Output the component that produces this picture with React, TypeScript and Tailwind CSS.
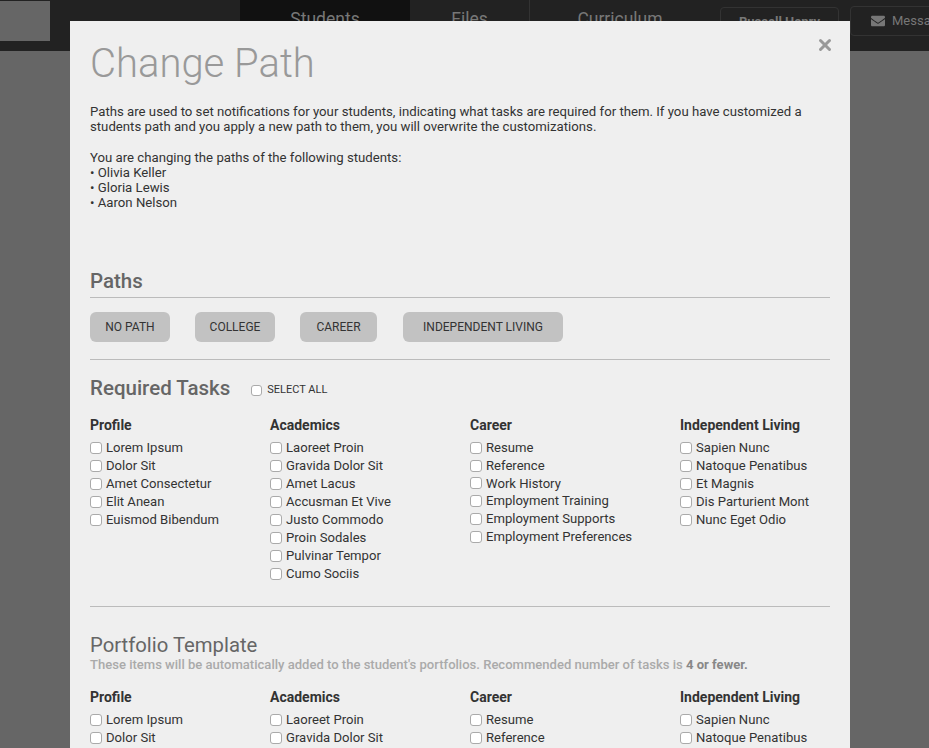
import React from 'react';
import { X } from 'lucide-react';
import { FaEnvelope } from 'react-icons/fa';

const COLUMNS = [
  { title: 'Profile', width: 'w-[180px]', row: 'h-[18px]', items: ['Lorem Ipsum', 'Dolor Sit', 'Amet Consectetur', 'Elit Anean', 'Euismod Bibendum'] },
  { title: 'Academics', width: 'w-[200px]', row: 'h-[18px]', items: ['Laoreet Proin', 'Gravida Dolor Sit', 'Amet Lacus', 'Accusman Et Vive', 'Justo Commodo', 'Proin Sodales', 'Pulvinar Tempor', 'Cumo Sociis'] },
  { title: 'Career', width: 'w-[210px]', row: 'h-[17.8px]', items: ['Resume', 'Reference', 'Work History', 'Employment Training', 'Employment Supports', 'Employment Preferences'] },
  { title: 'Independent Living', width: 'w-[150px]', row: 'h-[18px]', items: ['Sapien Nunc', 'Natoque Penatibus', 'Et Magnis', 'Dis Parturient Mont', 'Nunc Eget Odio'] },
];

const PATHS = [
  { label: 'NO PATH', className: 'w-[80px]' },
  { label: 'COLLEGE', className: 'w-[80px]' },
  { label: 'CAREER', className: 'w-[77px]' },
  { label: 'INDEPENDENT LIVING', className: 'w-[160px] ml-[1px]' },
];

const Checkbox = ({ className }: { className: string }) => (
  <input type="checkbox" className={`appearance-none bg-white border border-[#aaa] rounded-[3px] shrink-0 m-0 ${className}`} />
);

const TaskColumns = () => (
  <div className="flex">
    {COLUMNS.map(col => (
      <div key={col.title} className={col.width}>
        <h4 className="text-[14px] leading-[18px] font-bold text-[#333] mb-[5px]">{col.title}</h4>
        {col.items.map(item => (
          <label key={item} className={`flex items-center ${col.row} text-[13.1px] text-[#333]`}>
            <Checkbox className="w-[12px] h-[12px] mr-[4px]" />
            <span>{item}</span>
          </label>
        ))}
      </div>
    ))}
  </div>
);

const App: React.FC = () => {
  return (
    <div className="relative w-[929px] h-[748px] overflow-hidden bg-[#666] font-['Roboto',sans-serif]">
      <div className="h-[51px] bg-[#222] flex items-start">
        <div className="w-[50px] h-[40px] mt-[1px] bg-[#666] shrink-0" />
        <div className="ml-[190px] w-[170px] h-[51px] shrink-0 bg-[#111] text-center text-[#777] text-[17.5px] leading-[38px]">Students</div>
        <div className="w-[120px] h-[51px] shrink-0 text-center text-[#777] text-[17.5px] leading-[38px] border-r border-[#333]">Files</div>
        <div className="w-[180px] h-[51px] shrink-0 text-center text-[#777] text-[17.5px] leading-[38px]">Curriculum</div>
        <div className="ml-[10px] mt-[7px] w-[119px] h-[28px] shrink-0 border border-[#333] rounded-[4px] text-center text-[#777] text-[13px] font-bold leading-[28px]">Russell Henry</div>
        <div className="ml-[11px] mt-[6px] w-[100px] h-[30px] shrink-0 border border-[#333] rounded-[4px] flex items-center pl-[20px] text-[#777] text-[13px]">
          <FaEnvelope size={14} className="mr-[7px] shrink-0" />
          <span>Messages</span>
        </div>
      </div>

      <div className="absolute left-[70px] top-[21px] w-[780px] h-[727px] bg-[#efefef] px-[20px] overflow-hidden">
        <X size={18} strokeWidth={4} className="absolute right-[16px] top-[15px] text-[#999]" />
        <h1 className="text-[40px] leading-[50px] font-light text-[#999] mt-[18px]">Change Path</h1>
        <div className="mt-[15px] text-[13.2px] leading-[15px] text-[#333]">
          <p>Paths are used to set notifications for your students, indicating what tasks are required for them. If you have customized a students path and you apply a new path to them, you will overwrite the customizations.</p>
          <p className="mt-[16px]">You are changing the paths of the following students:</p>
          <p>• Olivia Keller</p>
          <p>• Gloria Lewis</p>
          <p>• Aaron Nelson</p>
        </div>

        <h2 className="mt-[56px] text-[20.5px] leading-[30px] font-medium text-[#666]">Paths</h2>
        <div className="mt-[1px] border-t border-[#bbb] pt-[14px] pb-[17px] flex gap-[25px] border-b">
          {PATHS.map(p => (
            <button key={p.label} className={`${p.className} h-[30px] bg-[#c2c2c2] rounded-[6px] text-[12px] text-[#333] text-center`}>{p.label}</button>
          ))}
        </div>

        <div className="mt-[13px] flex items-center">
          <h2 className="text-[20.5px] leading-[30px] font-medium text-[#666]">Required Tasks</h2>
          <label className="flex items-center ml-[21px] mt-[5px] text-[11px] text-[#333]">
            <Checkbox className="w-[11px] h-[11px] mr-[5px]" />
            SELECT ALL
          </label>
        </div>
        <div className="mt-[13px] h-[180px]"><TaskColumns /></div>

        <div className="mt-[10px] border-t border-[#bbb]" />
        <h2 className="mt-[23px] text-[20.3px] leading-[30px] font-normal text-[#666]">Portfolio Template</h2>
        <p className="text-[13.06px] leading-[9px] font-medium text-[#aaa]">These items will be automatically added to the student's portfolios. Recommended number of tasks is <b className="font-bold text-[#888]">4 or fewer.</b></p>
        <div className="mt-[19px]"><TaskColumns /></div>
      </div>
    </div>
  );
};

export default App;
